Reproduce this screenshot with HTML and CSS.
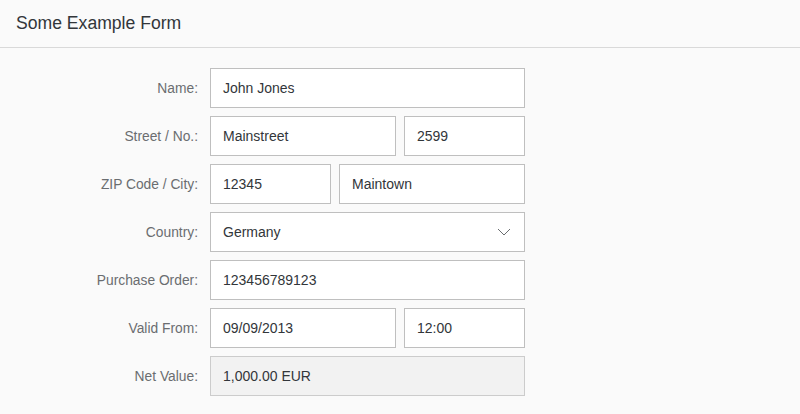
FILE: index.html
```html
<!DOCTYPE html>
<html lang="en">
<head>
<meta charset="utf-8">
<title>Some Example Form</title>
<link rel="stylesheet" href="styles.css">
</head>
<body>
<header class="bar"><h1 class="title">Some Example Form</h1></header>
<main class="form">
  <label class="lbl">Name:</label>
  <div class="fields"><div class="inp grow">John Jones</div></div>

  <label class="lbl">Street / No.:</label>
  <div class="fields"><div class="inp w186">Mainstreet</div><div class="inp grow">2599</div></div>

  <label class="lbl">ZIP Code / City:</label>
  <div class="fields"><div class="inp w121">12345</div><div class="inp grow">Maintown</div></div>

  <label class="lbl">Country:</label>
  <div class="fields"><div class="inp grow select"><span>Germany</span>
    <svg class="chev" width="14" height="8" viewBox="0 0 14 8"><path d="M1 1 L7 7 L13 1" fill="none" stroke="#6a6d70" stroke-width="1"/></svg></div></div>

  <label class="lbl">Purchase Order:</label>
  <div class="fields"><div class="inp grow">123456789123</div></div>

  <label class="lbl">Valid From:</label>
  <div class="fields"><div class="inp w186">09/09/2013</div><div class="inp grow">12:00</div></div>

  <label class="lbl">Net Value:</label>
  <div class="fields"><div class="inp grow ro">1,000.00 EUR</div></div>
</main>
</body>
</html>
```
FILE: styles.css
```css
html, body { margin: 0; padding: 0; }
body {
  background: #fafafa;
  font-family: "Liberation Sans", Arial, sans-serif;
  color: #32363a;
  width: 800px;
  height: 414px;
  overflow: hidden;
}
.bar {
  height: 47px;
  border-bottom: 1px solid #d9d9d9;
  display: flex;
  align-items: center;
  padding-left: 16px;
  background: #fafafa;
}
.title {
  margin: 0;
  font-size: 17.6px;
  font-weight: normal;
  color: #32363a;
}
.form {
  display: grid;
  grid-template-columns: 198px 315px;
  column-gap: 12px;
  row-gap: 8px;
  padding-top: 20px;
}
.lbl {
  display: flex;
  align-items: center;
  justify-content: flex-end;
  font-size: 13.8px;
  color: #6a6d70;
  height: 40px;
}
.fields {
  display: flex;
  gap: 8px;
}
.inp {
  box-sizing: border-box;
  height: 40px;
  border: 1px solid #bfbfbf;
  background: #fff;
  display: flex;
  align-items: center;
  padding: 0 12px;
  font-size: 14px;
  color: #32363a;
}
.grow { flex: 1; }
.w186 { width: 186px; flex: none; }
.w121 { width: 121px; flex: none; }
.select { justify-content: space-between; padding-right: 13px; }
.chev { display: block; }
.ro { background: #f2f2f2; border-color: #cccccc; }
```
